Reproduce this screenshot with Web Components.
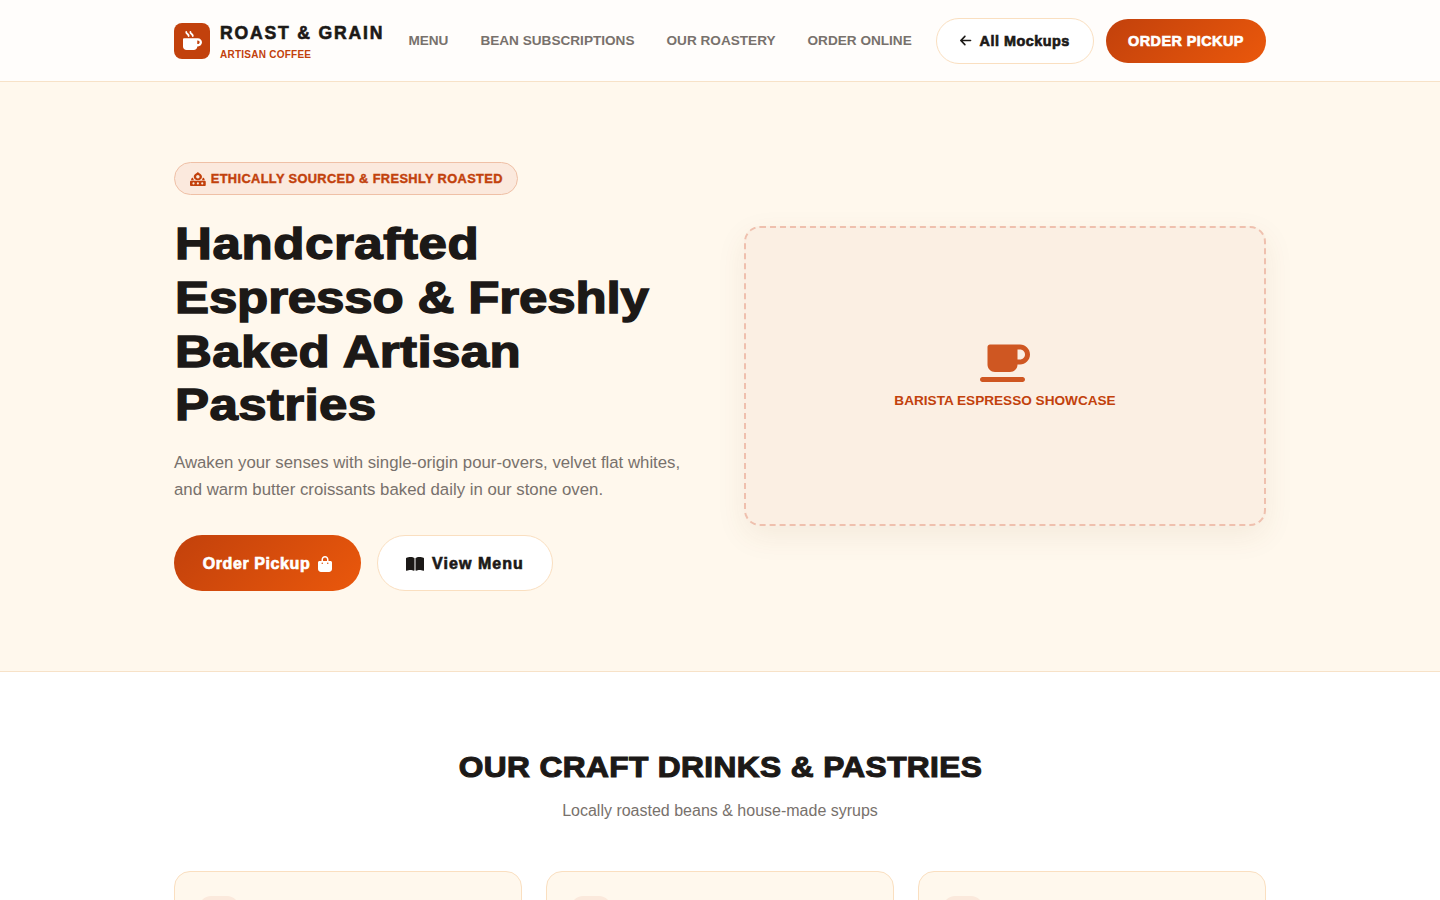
<!DOCTYPE html>
<html lang="en">
<head>
<meta charset="utf-8">
<title>Roast & Grain</title>
<style>
  html, body { margin: 0; height: 100%; }
  body { background: #fff; font-family: "Liberation Sans", Arial, sans-serif; height: 900px; overflow: hidden; }
</style>
</head>
<body>
<site-header></site-header>
<hero-section></hero-section>
<menu-section></menu-section>

<script>
const ICONS = {
  mug: '<path d="M88 0C74.700 0 64 10.700 64 24c0 38.900 23.400 59.400 39.100 73.100l1.100 1C120.500 112.300 128 119.900 128 136c0 13.300 10.700 24 24 24s24-10.700 24-24c0-38.900-23.400-59.400-39.100-73.100l-1.100-1C119.500 47.700 112 40.100 112 24c0-13.300-10.700-24-24-24zM32 192c-17.700 0-32 14.300-32 32V416c0 53 43 96 96 96H288c53 0 96-43 96-96h16c61.900 0 112-50.100 112-112s-50.100-112-112-112H352 32zm352 64h16c26.500 0 48 21.500 48 48s-21.500 48-48 48H384V256zM224 24c0-13.300-10.700-24-24-24s-24 10.700-24 24c0 38.900 23.400 59.400 39.100 73.100l1.100 1C232.500 112.300 240 119.900 240 136c0 13.300 10.700 24 24 24s24-10.700 24-24c0-38.900-23.400-59.400-39.100-73.100l-1.100-1C231.500 47.700 224 40.100 224 24z"/>',
  cup: '<path d="M96 64c0-17.700 14.300-32 32-32H448h64c70.700 0 128 57.300 128 128s-57.300 128-128 128H480c0 53-43 96-96 96H192c-53 0-96-43-96-96V64zM480 224h32c35.300 0 64-28.700 64-64s-28.700-64-64-64H480V224zM32 448H544c17.700 0 32 14.300 32 32s-14.300 32-32 32H32c-17.700 0-32-14.300-32-32s14.300-32 32-32z"/>',
  bag: '<path d="M160 112c0-35.300 28.700-64 64-64s64 28.700 64 64v48H160V112zm-48 48H48c-26.500 0-48 21.500-48 48V416c0 53 43 96 96 96H352c53 0 96-43 96-96V208c0-26.500-21.500-48-48-48H336V112C336 50.100 285.900 0 224 0S112 50.100 112 112v48zm24 48a24 24 0 1 1 0 48 24 24 0 1 1 0-48zm152 24a24 24 0 1 1 48 0 24 24 0 1 1-48 0z"/>',
  book: '<path d="M249.600 471.500c10.800 3.800 22.400-4.100 22.400-15.500V78.600c0-4.200-1.600-8.400-5-11C247.400 52 202.400 32 144 32C93.500 32 46.300 45.300 18.100 56.100C6.800 60.500 0 71.700 0 83.800V454.100c0 11.900 12.800 20.200 24.100 16.500C55.600 460.100 105.500 448 144 448c33.900 0 79 14 105.600 23.500zm76.800 0C353 462 398.100 448 432 448c38.500 0 88.400 12.100 119.900 22.600c11.300 3.800 24.100-4.600 24.100-16.500V83.800c0-12.100-6.800-23.300-18.100-27.600C529.700 45.300 482.500 32 432 32c-58.400 0-103.400 20-123 35.600c-3.300 2.600-5 6.800-5 11V456c0 11.400 11.700 19.300 22.400 15.500z"/>',
  arrow: '<path d="M9.400 233.400c-12.500 12.500-12.500 32.800 0 45.300l160 160c12.500 12.500 32.800 12.500 45.300 0s12.500-32.800 0-45.300L109.200 288 416 288c17.700 0 32-14.300 32-32s-14.300-32-32-32l-306.700 0L214.600 118.600c12.500-12.500 12.500-32.800 0-45.300s-32.800-12.500-45.300 0l-160 160z"/>',
  // flame ring over a burner with three holes
  roast: '<path fill-rule="evenodd" d="M288 0c-16 34-150 72-150 170 0 78 67 130 150 130s150-52 150-130C438 72 304 34 288 0zm0 110c34 0 62 28 62 62s-28 62-62 62-62-28-62-62 28-62 62-62z"/><path d="M88 210c-28 14-48 44-48 78v12h110c-20-22-36-50-40-90H88zm400 0h-22c-4 40-20 68-40 90h110v-12c0-34-20-64-48-78z"/><path fill-rule="evenodd" d="M32 320c-18 0-32 14-32 32v128c0 18 14 32 32 32h512c18 0 32-14 32-32V352c0-18-14-32-32-32H32zm96 56a40 40 0 1 1 0 80 40 40 0 1 1 0-80zm160 0a40 40 0 1 1 0 80 40 40 0 1 1 0-80zm160 0a40 40 0 1 1 0 80 40 40 0 1 1 0-80z"/>'
};

function icon(name, box, size) {
  return `<svg viewBox="0 0 ${box} 512" height="${size}" fill="currentColor" aria-hidden="true">${ICONS[name]}</svg>`;
}

const FONT = '"Liberation Sans", Arial, sans-serif';

class PillButton extends HTMLElement {
  constructor() {
    super();
    const shadow = this.attachShadow({ mode: 'open' });
    shadow.innerHTML = `
      <style>
        :host { display: inline-flex; align-items: center; justify-content: center; box-sizing: border-box;
          border-radius: 50px; font-family: ${FONT}; font-weight: 700; white-space: nowrap; }
        :host([kind="primary"]) { background: linear-gradient(135deg, #c2410c, #ea580c); color: #fff; }
        :host([kind="ghost"]) { background: #fff; color: #1c1917; border: 1px solid #fadfc0; }
        span { -webkit-text-stroke: .65px currentColor; }
      </style>
      <slot name="before"></slot><span><slot></slot></span><slot name="after"></slot>`;
  }
}
customElements.define('pill-button', PillButton);

class SiteHeader extends HTMLElement {
  constructor() {
    super();
    const shadow = this.attachShadow({ mode: 'open' });
    shadow.innerHTML = `
      <style>
        :host { display: block; background: #fffdfb; border-bottom: 1px solid #f7e2c8; font-family: ${FONT}; }
        .bar { width: 1092px; height: 81px; margin: 0 auto; display: flex; align-items: center; justify-content: space-between; }
        .brand { display: flex; align-items: center; gap: 10px; }
        .logo { width: 36px; height: 36px; border-radius: 8px; background: #c2410c; color: #fff; display: flex; align-items: center; justify-content: center; }
        .names { display: flex; flex-direction: column; }
        .name { padding-top: 1px; font-size: 17.6px; line-height: 23px; font-weight: 700; letter-spacing: 1.8px; color: #1c1917; -webkit-text-stroke: .6px #1c1917; }
        .tag { font-size: 10px; line-height: 13px; margin-top: 3px; font-weight: 700; letter-spacing: .25px; color: #c2410c; }
        nav { display: flex; gap: 32px; padding-bottom: 1px; }
        nav a { font-size: 13.6px; font-weight: 700; color: #78716c; text-decoration: none; }
        .actions { display: flex; align-items: center; gap: 12px; }
        .back { width: 158px; height: 46px; font-size: 14.4px; letter-spacing: .5px; gap: 8px; }
        .order { width: 160px; height: 44px; font-size: 14.4px; letter-spacing: .45px; }
      </style>
      <div class="bar">
        <div class="brand">
          <div class="logo">${icon('mug', 512, 19)}</div>
          <div class="names"><div class="name">ROAST &amp; GRAIN</div><div class="tag">ARTISAN COFFEE</div></div>
        </div>
        <nav><a>MENU</a><a>BEAN SUBSCRIPTIONS</a><a>OUR ROASTERY</a><a>ORDER ONLINE</a></nav>
        <div class="actions">
          <pill-button class="back" kind="ghost"><span slot="before" style="display:flex">${icon('arrow', 448, 13)}</span>All Mockups</pill-button>
          <pill-button class="order" kind="primary">ORDER PICKUP</pill-button>
        </div>
      </div>`;
  }
}
customElements.define('site-header', SiteHeader);

class HeroSection extends HTMLElement {
  constructor() {
    super();
    const shadow = this.attachShadow({ mode: 'open' });
    shadow.innerHTML = `
      <style>
        :host { display: block; background: #fff8ed; border-bottom: 1px solid #f7e2c8; font-family: ${FONT}; }
        .wrap { width: 1092px; margin: 0 auto; padding: 80px 0; display: grid; grid-template-columns: 1fr 522px; column-gap: 48px; align-items: center; }
        .badge { display: inline-flex; align-items: center; gap: 5px; height: 33px; box-sizing: border-box; padding: 0 14px 0 15px; border-radius: 50px;
          background: #fbe9dd; border: 1px solid #efc0a6; color: #c2410c; font-size: 12.8px; font-weight: 700; letter-spacing: .38px; }
        .badge b { -webkit-text-stroke: .4px currentColor; }
        /* no heavy wide face installed, so the bold is stretched to the same measure */
        h1 { margin: 22px 0 17px 1px; width: calc(100% / 1.14); transform: scaleX(1.14); transform-origin: left top; font-size: 44.8px; line-height: 53.76px;
          font-weight: 700; letter-spacing: .3px; color: #1c1917; -webkit-text-stroke: 1.4px #1c1917; }
        h1 .first { letter-spacing: .5px; }
        h1 .second { letter-spacing: -.15px; }
        p { margin: 0 0 32px; font-size: 16.8px; line-height: 27px; color: #78716c; }
        .cta { display: flex; gap: 16px; }
        .cta pill-button { height: 56px; padding-top: 1px; font-size: 16px; letter-spacing: .6px; gap: 8px; }
        .cta .a { width: 187px; }
        .cta .b { width: 176px; letter-spacing: 1.05px; }
        .ph { height: 300px; margin-top: -1px; box-sizing: border-box; border: 2px dashed #efc0ae; border-radius: 16px; background: #fbefe3;
          box-shadow: 0 10px 30px rgba(120,80,40,.08); display: flex; flex-direction: column; align-items: center; justify-content: center; color: #c2410c; }
        .ph svg { color: #cf5722; }
        .ph span { margin-top: 8px; font-size: 13.6px; line-height: 21px; font-weight: 700; }
      </style>
      <div class="wrap">
        <div>
          <div class="badge">${icon('roast', 576, 14)}<b>ETHICALLY SOURCED &amp; FRESHLY ROASTED</b></div>
          <h1><span class="first">Handcrafted</span> <span class="second">Espresso &amp; Freshly</span> Baked Artisan Pastries</h1>
          <p>Awaken your senses with single-origin pour-overs, velvet flat whites, and warm butter croissants baked daily in our stone oven.</p>
          <div class="cta">
            <pill-button class="a" kind="primary">Order Pickup<span slot="after" style="display:flex">${icon('bag', 448, 16)}</span></pill-button>
            <pill-button class="b" kind="ghost"><span slot="before" style="display:flex">${icon('book', 576, 16)}</span>View Menu</pill-button>
          </div>
        </div>
        <div class="ph">
          ${icon('cup', 640, 40)}
          <span>BARISTA ESPRESSO SHOWCASE</span>
        </div>
      </div>`;
  }
}
customElements.define('hero-section', HeroSection);

class DrinkCard extends HTMLElement {
  constructor() {
    super();
    const shadow = this.attachShadow({ mode: 'open' });
    shadow.innerHTML = `
      <style>
        :host { display: block; box-sizing: border-box; height: 240px; padding: 24px; background: #fff8ed; border: 1px solid #fadfc0; border-radius: 16px; }
        .thumb { width: 40px; height: 40px; border-radius: 12px; background: #fbe9dc; }
      </style>
      <div class="thumb"></div>`;
  }
}
customElements.define('drink-card', DrinkCard);

class MenuSection extends HTMLElement {
  constructor() {
    super();
    const shadow = this.attachShadow({ mode: 'open' });
    shadow.innerHTML = `
      <style>
        :host { display: block; background: #fff; font-family: ${FONT}; }
        .wrap { width: 1092px; margin: 0 auto; padding-top: 78px; text-align: center; }
        h2 { margin: 0 0 0 1px; font-size: 28.8px; line-height: 34.56px; letter-spacing: .35px; color: #1c1917; -webkit-text-stroke: 1.1px #1c1917; transform: scaleX(1.1); }
        p { margin: 14px 0 0; font-size: 16px; line-height: 24px; color: #78716c; }
        .grid { display: grid; grid-template-columns: repeat(3, 1fr); gap: 24px; margin-top: 48px; }
      </style>
      <div class="wrap">
        <h2>OUR CRAFT DRINKS &amp; PASTRIES</h2>
        <p>Locally roasted beans &amp; house-made syrups</p>
        <div class="grid"><drink-card></drink-card><drink-card></drink-card><drink-card></drink-card></div>
      </div>`;
  }
}
customElements.define('menu-section', MenuSection);
</script>
</body>
</html>
